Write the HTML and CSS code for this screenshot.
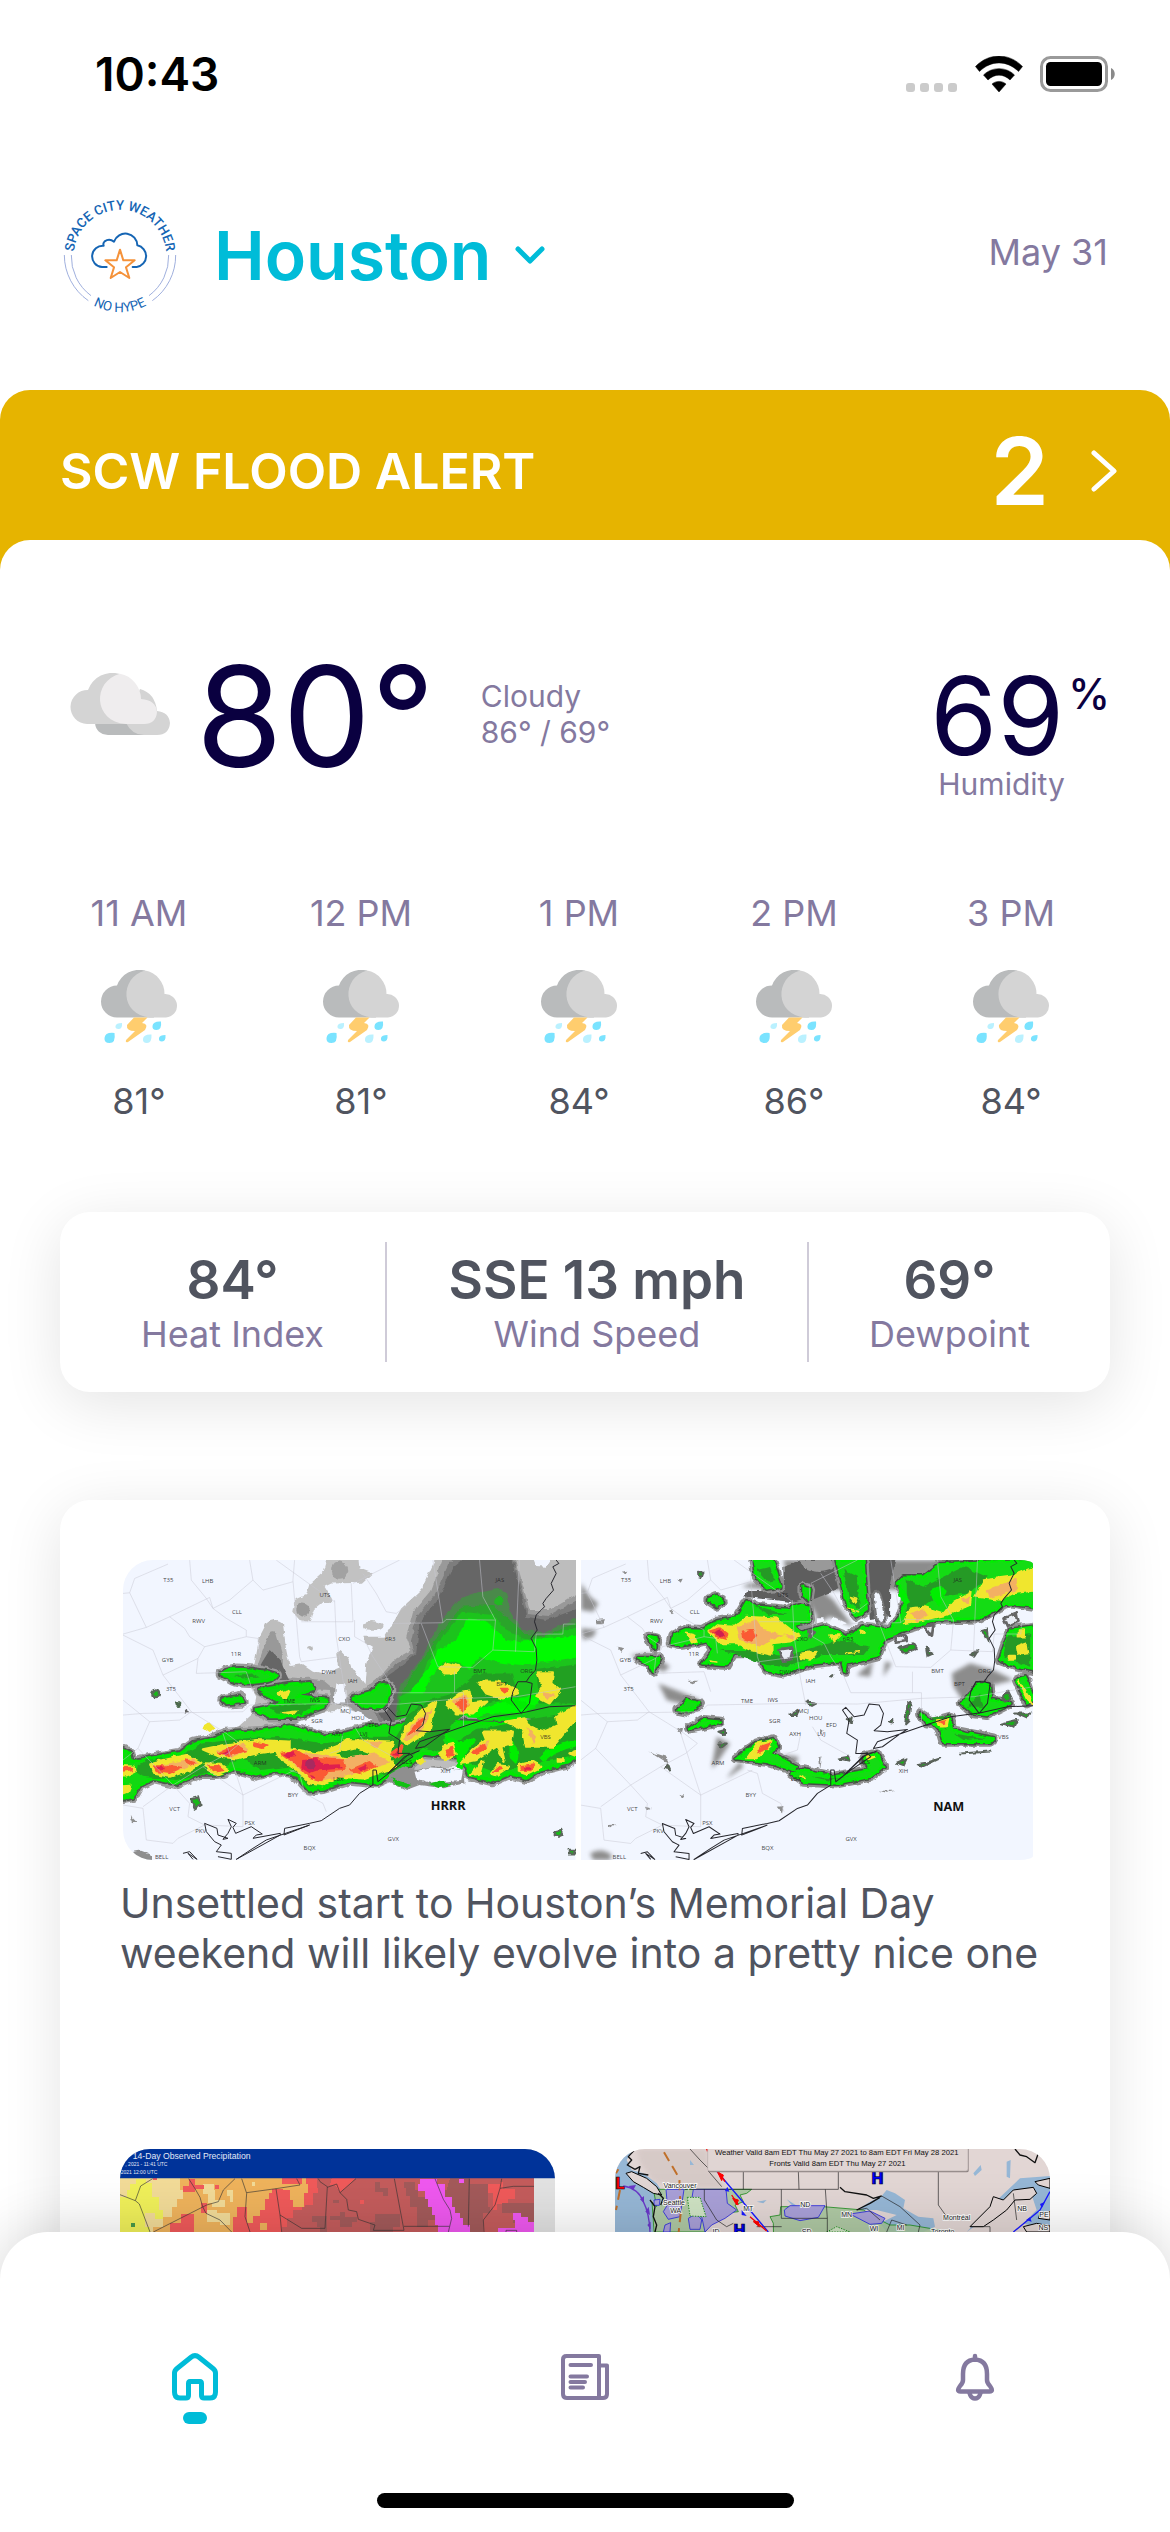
FILE: index.html
```html
<!DOCTYPE html>
<html lang="en">
<head>
<meta charset="utf-8">
<meta name="viewport" content="width=device-width, initial-scale=1">
<title>Space City Weather</title>
<link rel="stylesheet" href="styles.css">
</head>
<body>
<svg class="defs" aria-hidden="true">
  <defs>
    <symbol id="storm" viewBox="0 0 78 74">
      <path fill="#b9bbbc" d="M17 47.500A16 16 0 0 1 17 15.500A23.500 23.500 0 0 1 45 .6L54 47.500Z"/>
      <path fill="#d4d4d4" d="M45 .6A23.500 23.500 0 0 1 64.500 24A11.700 11.700 0 0 1 66 47.500H50C20 45 19 8 45 .6Z"/>
      <path fill="#ffcd6e" d="M34 47.500H47.500L42 53Q49 54 45 60L28 72Q25 73 26 70L35 61Q26 61 27 55Z"/>
      <path fill="#7ae3ff" d="M14.500 63Q16 73 9.500 73Q4 73 4.500 68Q5 62 14.500 63ZM61 51.500Q62 60 56.500 60Q52 60 52.500 56Q53 51 61 51.500ZM65.500 65Q66 71.500 62 71.500Q58.500 71.500 59 68Q59.500 65 65.500 65Z"/>
      <path fill="#baf1ff" d="M22 53Q22.500 59 18.500 59Q15 59 15.500 56Q16 53 22 53ZM51.500 64.500Q52 73 47 73Q42.500 73 43 69Q43.500 64 51.500 64.500Z"/>
    </symbol>
    <filter id="soft" x="-5%" y="-5%" width="110%" height="110%" color-interpolation-filters="sRGB">
      <feTurbulence type="fractalNoise" baseFrequency=".05" numOctaves="2" seed="4" result="noise"/>
      <feGaussianBlur in="SourceGraphic" stdDeviation="2" result="shape"/>
      <feDisplacementMap in="shape" in2="noise" scale="14" xChannelSelector="R" yChannelSelector="G"/>
    </filter>
    <filter id="softer" x="-5%" y="-5%" width="110%" height="110%" color-interpolation-filters="sRGB"><feGaussianBlur stdDeviation="7"/></filter>
    <g id="counties" fill="none" stroke="#c9c9d2" stroke-width="2.500" stroke-linejoin="round">
      <path d="M40 160L60 158 110 262M60 158L75 115 175 72M40 282L110 262 180 230 300 172 310 205 290 175 245 120 240 60M310 205L360 180 430 120 420 60M180 230L225 265 240 290 285 320 410 290 410 270 350 235 310 205M40 285L130 330 160 405 265 355 285 320M410 290L445 295 450 340M265 355L260 400 410 395 430 455 M40 480L120 545 210 540 245 515 160 405M40 525L100 520 400 515 420 495 690 490 870 492 1060 475 1220 470 1398 440M120 545L85 625 190 735 280 680 355 640 390 610 350 580 245 515M85 625L40 660M190 735L100 800M190 735L240 790 235 830 285 855 400 860 400 765 555 690M400 765L280 680M400 765L340 580M40 795L100 805 110 900 190 910 205 895 285 855M555 60L550 120 570 350 575 365 690 350M550 125L460 150 430 120M575 245L730 245 725 130M675 180L680 290 700 420 715 495M500 60L590 125 675 185M730 130L870 60M760 100L800 160 830 215 860 220 900 190M850 250L1000 248 1010 238 1158 240 1150 330 1275 335 1280 282 1360 282 1362 252 1398 252M970 60L1000 248M935 250L985 380 1090 382 1150 330M1110 60L1120 170 1158 240M1230 60L1218 335M850 458L1062 458 1062 560M1035 395V458M540 690L570 700 585 760 640 790 650 815M700 580L690 630 660 640M735 240L735 290 770 310 790 350 830 410 850 458M735 560L760 600 850 650"/>
    </g>
    <g id="coast" fill="none" stroke="#26262c" stroke-width="3" stroke-linejoin="round">
      <path d="M1340 60L1348 70 1330 80 1340 100 1325 130 1332 150 1310 175 1300 190 1305 200 1280 225 1275 245 1283 270 1265 295 1280 325 1282 360 1278 390 1260 410 1250 425 1225 425 1210 455 1205 480 1235 520 1260 490 1268 430 1250 425M1398 497L1320 500 1240 518 1150 530 1060 560 930 605 918 625 945 620 1000 580 1020 568 960 575 920 572 940 555 948 520 935 495 905 492 890 525 860 530 835 502 825 510 845 540 838 580 870 600 865 640 900 640 910 650 850 690 805 725 800 690 790 690 790 735 750 760 720 795 690 805 635 842 600 850 525 865 523 885 600 855M900 640L835 700 885 650 930 632M600 855L470 900 430 925 380 958 512 885 512 880 430 895 440 885 458 882 425 860 378 880 370 862 380 850 355 838 365 860 355 880 340 898 355 895 325 885 322 865 285 850 290 875 315 905 335 915 320 935 365 940 365 958 325 950M220 940L240 935 262 958 235 940 250 958"/>
    </g>
    <g id="stations" class="map-station">
      <text x="176" y="125">T35</text><text x="294" y="128">LHB</text><text x="382" y="223">CLL</text><text x="267" y="248">RWV</text>
      <text x="379" y="349">11R</text><text x="174" y="365">GYB</text><text x="184" y="454">3T5</text><text x="646" y="170">UTS</text>
      <text x="704" y="304">CXO</text><text x="842" y="303">6R3</text><text x="1171" y="125">JAS</text><text x="657" y="402">DWH</text>
      <text x="729" y="429">IAH</text><text x="539" y="489">TME</text><text x="616" y="485">IWS</text><text x="708" y="519">MCJ</text>
      <text x="622" y="550">SGR</text><text x="745" y="541">HOU</text><text x="792" y="560">EFD</text><text x="683" y="589">AXH</text>
      <text x="762" y="589">LVJ</text><text x="452" y="675">ARM</text><text x="686" y="724">LBX</text><text x="550" y="770">BYY</text>
      <text x="892" y="672">GLS</text><text x="1008" y="700">XIH</text><text x="1110" y="399">BMT</text><text x="1251" y="399">ORG</text>
      <text x="1176" y="439">BPT</text><text x="1308" y="598">VBS</text><text x="195" y="812">VCT</text><text x="420" y="854">PSX</text>
      <text x="273" y="879">PKV</text><text x="600" y="931">BQX</text><text x="851" y="903">GVX</text><text x="156" y="958">BELL</text>
    </g>
    <path id="rain-hrrr" d="M40 628L60 640 66 665 150 650 210 640 250 610 300 600 350 580 450 575 540 560 640 590 700 585 780 560 850 560 930 540 1398 560 1398 655 1370 670 1290 690 1250 715 1200 700 1150 722 1080 705 1060 650 940 640 880 690 800 728 720 720 640 745 600 750 560 705 500 690 440 705 370 685 330 700 270 700 200 730 130 715 90 735 70 770 40 775ZM335 400Q360 385 400 388Q460 392 500 405Q490 420 450 425Q400 430 370 420ZM450 450L540 435 600 430 610 445 560 470 650 480 640 500 560 530 480 530 440 510 520 490ZM340 480L390 470 400 485 350 488ZM730 475L780 460 Q820 420 840 440L840 460 820 500 760 500Z"/>
    <path id="rain-nam" d="M550 60L560 110 590 145 630 140 620 100 605 60ZM700 140L720 150 715 180 700 165ZM415 180L440 168 458 185 440 197ZM305 310L310 285 350 268 400 270 440 245 500 235 530 185 560 200 650 210 690 195 715 200 720 240 670 255 690 280 760 260 830 290 880 260 960 270 990 230 1010 170 980 130 1000 110 1060 110 1110 70 1390 60 1390 200 1320 190 1290 200 1230 235 1100 240 1000 270 940 300 920 350 830 370 825 395 815 360 730 370 640 400 590 390 565 340 490 340 470 375 400 370 430 330 410 300 370 310 330 315ZM235 290L260 295 255 325ZM205 355L270 355 250 395 235 370ZM1290 360L1320 270 1390 260V390L1340 380ZM325 510L350 480 390 490 350 515ZM360 565L400 540 450 545 390 560ZM500 655L560 610 610 598 620 620 600 640 680 680 670 690 590 665ZM665 700L700 690 790 710 900 690 880 650 920 640 940 680 900 710 800 730 700 725ZM1050 520L1070 550 1140 530 1145 570 1270 595 1260 605 1190 605 1120 605 1110 570 1090 550ZM1175 490L1225 430 1255 430 1260 480 1320 490 1250 525 1210 520ZM1340 420L1365 410 1390 480 1370 490ZM800 60L830 190 860 230 890 210 880 60Z"/>
  </defs>
</svg>

<div class="app">
  <div class="status">
    <span class="status-time">10:43</span>
    <div class="status-icons">
      <svg width="52" height="36" viewBox="0 0 52 36" fill="#cbcbcb" aria-hidden="true"><rect y="27" width="9" height="9" rx="3"/><rect x="14" y="27" width="9" height="9" rx="3"/><rect x="28" y="27" width="9" height="9" rx="3"/><rect x="42" y="27" width="9" height="9" rx="3"/></svg>
      <svg width="48" height="36" viewBox="0 0 48 36" aria-hidden="true"><path d="M0.500 10.500C14-3.500 34-3.500 47.500 10.500L43.500 15.500C32 4 16 4 4.500 15.500ZM8.500 19C17 10.500 31 10.500 39.500 19L35 24C28.500 17.500 19.500 17.500 13 24ZM17 28C21 24.500 27 24.500 31 28L24 36Z" stroke="#000" stroke-width=".5" stroke-linejoin="round"/></svg>
      <svg width="75" height="36" viewBox="0 0 75 36" aria-hidden="true"><rect x="1.500" y="1.500" width="65" height="33" rx="9" fill="none" stroke="#9a9a9a" stroke-width="3"/><rect x="6" y="6" width="56" height="24" rx="4.500"/><path d="M71 12C76 14 76 22 71 24Z" fill="#8a8a8a"/></svg>
    </div>
  </div>

  <header class="header">
    <svg class="logo" viewBox="60 45 360 360" role="img" aria-label="Space City Weather, no hype">
      <defs>
        <path id="arc-top" d="M102 245A139 139 0 1 1 378 245"/>
        <path id="arc-bottom" d="M71 227A169 169 0 0 0 409 227"/>
      </defs>
      <g fill="none" stroke="#8b9fd6" stroke-width="2.500">
        <path d="M73 225A167 167 0 0 0 145 362M94 225A146 146 0 0 0 153 347M407 225A167 167 0 0 1 337 362M386 225A146 146 0 0 1 327 347"/>
      </g>
      <g fill="none" stroke-width="6" stroke-linecap="round" stroke-linejoin="round">
        <path stroke="#1565b4" d="M200 261H186A32 32 0 0 1 191 197Q188 190 194 184Q208 174 222 185A36 36 0 0 1 292 196A33 33 0 0 1 290 261H278"/>
        <path stroke="#f5923a" d="M240 209L250 241H284L258 262 268 294 240 276 212 294 222 262 196 241H230Z"/>
      </g>
      <text class="logo-name"><textPath href="#arc-top" startOffset="50%">SPACE CITY WEATHER</textPath></text>
      <text class="logo-tag"><textPath href="#arc-bottom" startOffset="50%">NO HYPE</textPath></text>
    </svg>
    <button class="city" type="button">
      <span>Houston</span>
      <svg width="30" height="18" viewBox="0 0 30 18" fill="none" stroke="currentColor" stroke-width="5" stroke-linecap="round" stroke-linejoin="round" aria-hidden="true"><path d="M3 3L15 15 27 3"/></svg>
    </button>
    <time class="date" datetime="2021-05-31">May 31</time>
  </header>

  <a class="alert" href="#alert">
    <span class="alert-name">SCW FLOOD ALERT</span>
    <span class="alert-level">2</span>
    <svg width="26" height="42" viewBox="0 0 26 42" fill="none" stroke="#fff" stroke-width="5" stroke-linecap="round" stroke-linejoin="round" aria-hidden="true"><path d="M3 3L23 21 3 39"/></svg>
  </a>

  <main class="sheet">
    <section class="current">
      <div class="now">
        <svg class="now-icon" width="100" height="62" viewBox="0 0 100 62" aria-hidden="true">
          <path fill="#b9bbbc" d="M38 62Q26 61 25 50L60 20 76 62Z"/>
          <path fill="#d4d4d4" d="M56 50L70 16Q85 20 87 38Q99 39 100 50Q99 62 87 62H74Q62 62 56 50Z"/>
          <path fill="#d4d4d4" d="M17 51A17 17 0 0 1 18 17A26 26 0 0 1 50 1L62 51Z"/>
          <path fill="#efedee" d="M50 .8A26 26 0 0 1 71 26Q86 27 87 39Q86 51 74 51H56C23 49 22 8 50 .8Z"/>
        </svg>
        <strong class="now-temp">80°</strong>
        <p class="now-text">Cloudy<br>86° / 69°</p>
      </div>
      <div class="humidity">
        <p class="humidity-value">69<sup>%</sup></p>
        <p class="humidity-label">Humidity</p>
      </div>
    </section>

    <ol class="hours">
      <li><span>11 AM</span><svg><use href="#storm"/></svg><b>81°</b></li>
      <li><span>12 PM</span><svg><use href="#storm"/></svg><b>81°</b></li>
      <li><span>1 PM</span><svg><use href="#storm"/></svg><b>84°</b></li>
      <li><span>2 PM</span><svg><use href="#storm"/></svg><b>86°</b></li>
      <li><span>3 PM</span><svg><use href="#storm"/></svg><b>84°</b></li>
    </ol>

    <dl class="card stats">
      <div><dd>84°</dd><dt>Heat Index</dt></div>
      <div><dd>SSE 13 mph</dd><dt>Wind Speed</dt></div>
      <div><dd>69°</dd><dt>Dewpoint</dt></div>
    </dl>

    <section class="card news">
      <article class="lead">
        <div class="lead-maps">
          <svg viewBox="40 60 1358 900" role="img" aria-label="HRRR rainfall forecast">
            <path fill="#f2f6ff" d="M40 60H1398V960H40Z"/>
            <g filter="url(#soft)">
              <path fill="#c2c2c2" d="M655 40L640 95 600 130 590 165 555 180 548 215 570 240 600 245 615 205 640 185 672 190 660 165 645 140 665 130 760 128 790 100 750 85 745 40ZM760 250Q790 235 820 250 830 270 790 272 755 275 760 250Z"/>
              <circle cx="690" cy="90" r="26" fill="#a2a2a2"/><circle cx="580" cy="210" r="20" fill="#9a9a9a"/><circle cx="600" cy="325" r="7" fill="#bbb"/>
              <path fill="#bdbdbd" d="M985 40L935 150 875 205 850 250 825 290 765 290 765 305 790 320 770 370 765 435 725 380 715 355 690 330 680 340 690 385 650 402 610 392 580 372 540 378 530 330 520 250 Q500 230 470 250L450 290 435 370 400 400 440 470 430 520 380 565 300 590 240 620 240 700 800 700 1420 650 1420 40Z"/>
              <path fill="#999" d="M1005 40L965 150 910 215 890 290 905 330 860 355 820 400 780 430 760 490 700 470 640 420 520 410 520 350 500 280 Q480 270 475 290L445 370 450 440 660 450 670 490 720 500 830 570 1420 600 1420 150 1320 210 1260 210 1215 40Z"/>
              <path fill="#7d7d7d" d="M1018 70L975 165 920 232 905 300 915 338 860 372 810 415 790 445 780 500 840 585 1420 560 1420 175 1315 228 1255 222 1210 40 1050 40Z"/>
              <path fill="#666" d="M1030 80L985 180 930 250 920 340 860 390 800 430 800 500 850 590 1420 520 1420 200 1310 240 1250 230 1205 40 1080 40ZM480 330L455 370 480 420 540 420 510 360Z"/>
              <path fill="#f2f6ff" d="M555 550L600 525 680 512 700 498 760 522 795 545 760 550 735 550 700 580 640 585 600 575ZM1265 40L1280 78 1310 80 1335 40ZM680 430H705L710 490 675 490Z"/>
              <path fill="#4a8a4a" d="M1050 175L1110 155 1165 143 1190 160 1205 220 1235 265 1300 280 1420 222V650H860L855 540 870 440 940 350 965 290 1010 225Z"/>
              <path fill="#2aa52a" d="M1055 200L1150 195 1190 230 1245 280 1300 290 1420 240V640H865L862 500 890 430 945 350 980 295Z"/>
              <path fill="#1cc41c" d="M1060 215L1150 225 1190 270 1250 300 1420 260V600H870L870 470 930 440 950 370 990 300Z"/>
              <path fill="#00fa00" d="M1075 235Q1120 235 1150 260L1190 300Q1240 310 1290 295L1420 285V350L1240 375Q1160 370 1110 350L1080 390Q1060 370 1030 362L1000 370 965 410 940 460 900 460Q930 410 960 380L985 330 1040 300ZM1420 440L1330 460 1240 520 1130 520 1040 550 1060 510 1130 500 1200 480Z"/>
              <circle cx="1168" cy="185" r="14" fill="#22b822"/>
              <g stroke-linejoin="round">
                <use href="#rain-hrrr" fill="#9a9a9a" stroke="#9a9a9a" stroke-width="34"/>
                <use href="#rain-hrrr" fill="#4f584f" stroke="#4f584f" stroke-width="20"/>
                <use href="#rain-hrrr" fill="#12d812" stroke="#00e800" stroke-width="9"/>
              </g>
              <path fill="#22a022" d="M70 690L110 660 210 650 280 610 400 595 520 590 640 610 760 590 860 590 900 520 960 480 1030 460 1100 400 1210 400 1230 470 1130 490 1040 540 1000 600 1010 625 1100 570 1250 540 1420 510V640L1240 680 1160 700 1060 660 940 620 850 700 700 710 600 740 540 680 450 690 400 650 330 690 200 720 100 710ZM370 405L430 400 450 412 400 415ZM480 500L620 490 570 525 500 520ZM1280 390L1420 370V490L1290 490Z"/>
              <path fill="#00ee00" d="M1010 580Q1050 620 1090 590L1100 600Q1060 640 1060 690L1040 680Q1050 630 1010 600ZM1200 590Q1240 640 1220 670L1200 650ZM1290 650Q1330 610 1398 600V620Q1340 630 1300 670ZM1180 460Q1240 480 1280 500L1260 510Q1210 500 1170 480ZM1100 530Q1180 530 1240 530L1200 542H1110Z"/>
              <path fill="#8f8f8f" d="M845 700L880 680 920 690 980 680 1060 690 1065 730 1000 745 930 735 890 750 830 720Z"/>
              <path fill="#f2f6ff" d="M915 695L960 685 1060 692 1055 720 960 728 920 715Z"/>
              <path fill="#12c012" d="M845 715L905 735 890 745 855 730ZM955 732L990 722 1030 732 990 745Z"/>
              <path fill="#f0e62e" stroke="#f0e62e" stroke-width="7" stroke-linejoin="round" d="M20 678L72 680 75 695 50 706 20 706ZM20 740L62 738 55 755 20 768ZM122 670L160 660 230 645 275 668 240 690 180 710 130 700ZM280 628L340 615 440 600 540 605 540 625 620 640 680 620 710 600 850 605 840 660 860 680 760 715 690 710 640 735 600 730 560 690 510 655 500 632 440 640 380 655 330 650ZM285 670L330 672 355 690 325 702 295 690ZM285 560L300 550 312 562 300 572ZM875 600L890 560 940 510 980 485 960 570 900 610ZM1010 490L1050 460 1080 455 1085 490 1130 485 1090 520 1040 520ZM990 385L1020 370 1050 380 1040 400 1005 400ZM1105 425L1160 425 1210 440 1225 460 1180 475 1130 460ZM1285 400L1330 400 1325 430 1350 450 1320 490 1280 470 1300 440ZM1190 545L1245 535 1260 560 1300 575 1345 555 1340 530 1420 485 1420 510 1330 620 1250 620 1240 570ZM1120 575L1210 575 1205 610 1175 620 1185 665 1160 620 1100 660 1055 668 1090 630 1130 600ZM1000 620L1030 612 1038 640 1010 660 992 645ZM1085 705L1120 665 1110 700ZM1145 700L1165 675 1198 680 1160 705ZM1228 675L1270 665 1295 680 1250 702 1228 695ZM920 664L935 655 945 664 935 672ZM1345 655H1362V665H1345ZM505 460L540 450 530 475ZM520 516L560 512 550 522ZM1380 640L1420 625V655Z"/>
              <path fill="#22a022" d="M680 640L740 625 780 640 750 655 700 650Z"/>
              <path fill="#f3b063" d="M130 680L250 655 265 670 180 700ZM320 635L400 610 420 630 370 650ZM515 640L600 640 700 655 800 640 840 670 740 700 620 725 560 680ZM880 600L905 555 950 520 970 500 945 560 905 600ZM1030 480L1070 460 1080 490 1050 515ZM1250 560L1280 590 1270 610ZM1090 630L1140 600 1130 630ZM770 605L820 605 800 625ZM1300 455L1335 465 1310 480Z"/>
              <path fill="#fb5a34" stroke="#fb5a34" stroke-width="4" stroke-linejoin="round" d="M20 684L65 682 68 692 20 698ZM132 678L190 678 215 682 180 700 140 695ZM230 660L255 668 240 675ZM325 640L380 615 410 632 350 648ZM430 605L475 615 460 625 430 618ZM515 640L560 630 600 655 700 660 710 690 650 695 635 725 600 715 570 680ZM720 690L780 665 800 680 750 700ZM845 640L880 615 875 640 855 655ZM895 585L920 550 945 535 915 575ZM1040 490L1065 472 1075 495 1060 515ZM1170 445L1195 445 1185 458ZM1090 640L1125 610 1130 625 1100 640ZM1010 628L1030 622 1030 645 1015 648ZM1150 695L1165 682 1178 685ZM1235 680L1275 675 1260 692 1235 690ZM295 678L325 677 342 692 320 695Z"/>
              <path fill="#e01f4e" d="M140 680H168V688H142ZM330 645L360 630 350 645ZM520 642L550 634 560 648 535 652ZM578 660L620 655 640 672 690 670 700 685 620 692 600 700 575 685ZM745 685L770 675 775 685 755 695ZM600 705L620 712 610 718ZM1240 682H1262V689H1242ZM850 645L870 630 862 648Z"/>
              <circle cx="603" cy="672" r="16" fill="#a82a60"/>
              <g fill="#18b818" stroke="#5b665b" stroke-width="7"><circle cx="138" cy="461" r="10"/><path d="M245 775L265 770 272 795 255 805 248 790ZM1336 874L1352 870 1358 884 1345 890 1336 886ZM1378 930H1398V940H1378Z"/></g>
              <circle cx="206" cy="492" r="9" fill="#4d6a4d"/><circle cx="230" cy="514" r="7" fill="#666"/><path fill="#8e8e8e" d="M60 825L80 845 70 850ZM65 940Q95 920 130 950V970H70Z"/>
            </g>
            <use href="#counties" opacity=".6"/><use href="#coast"/><use href="#stations"/>
            <text class="map-model" x="1016" y="810">HRRR</text>
          </svg>
          <svg viewBox="33 60 1357 900" role="img" aria-label="NAM rainfall forecast">
            <path fill="#f2f6ff" d="M33 60H1390V960H33Z"/>
            <g filter="url(#softer)" fill="#8c8c8c">
              <path d="M640 60L650 100 690 130 780 150 1390 150V60ZM515 140L600 150 700 160 740 230 730 260 780 230 850 260 790 180 720 120 540 130ZM33 130L60 170 85 190 70 215 33 210ZM33 265L80 270 70 290 40 300ZM1145 400L1200 370 1270 390 1330 420 1250 440 1190 500 1150 440ZM60 940Q95 920 125 945L120 960H70ZM640 645L685 650 680 670 650 665ZM180 345L240 340 300 380 280 395ZM265 430L330 455 390 480 370 500 290 480ZM440 590L480 610 440 670 425 685ZM520 680L470 715 480 700 510 665ZM900 370L910 350 900 410 860 405ZM945 365L965 370 940 410Z"/>
            </g>
            <g filter="url(#soft)" stroke-linejoin="round">
              <path fill="#5e5e5e" d="M640 80L760 40 980 40 960 130 960 230 900 240 880 100 800 150 700 190 520 170 530 150 640 150ZM900 150L940 150 950 250 920 255 900 200Z"/>
              <path fill="#999" d="M680 60Q720 110 780 90L800 60ZM820 110L860 130 880 180 850 160Z"/>
              <path fill="#f2f6ff" d="M740 235L760 235 775 270 790 230 830 250 800 265 740 265Z"/>
              <use href="#rain-nam" fill="#8e8e8e" stroke="#8e8e8e" stroke-width="30"/>
              <use href="#rain-nam" fill="#474f47" stroke="#474f47" stroke-width="16"/>
              <use href="#rain-nam" fill="#14dc14" stroke="#00ee00" stroke-width="7"/>
              <path fill="#f2f6ff" stroke="#777" stroke-width="8" d="M908 158Q925 145 932 170L948 230Q935 262 918 235Z"/>
              <path fill="#259a25" d="M450 330L560 330 640 350 800 300 900 320 880 345 760 345 640 380 590 375ZM560 90L600 80 615 120 590 125ZM1010 120L1060 140 1100 120 1180 80 1250 110 1200 160 1100 170 1010 240ZM1310 290L1380 280V380L1300 350ZM1190 500L1230 460 1240 500ZM1080 530L1120 525 1130 570ZM1150 580L1250 595 1180 600ZM550 195L650 225 600 225ZM725 710L800 715 850 705 780 722ZM820 90L860 110 870 210 840 190Z"/>
              <path fill="#00ee00" d="M1080 150Q1110 130 1130 150L1110 200Q1085 190 1080 150ZM980 140Q1010 150 1020 190L1000 200Z"/>
              <path fill="#e9edf5" stroke="#666" stroke-width="8" d="M625 328L668 322 662 358 638 362ZM718 272L734 280 722 292ZM970 290L1000 285 1010 300 980 305ZM1065 260L1090 255 1085 290ZM1300 235L1340 220 1345 245 1310 258Z"/>
              <path fill="#f0e62e" stroke="#f0e62e" stroke-width="5" d="M415 275L440 255 490 260 530 230 620 235 690 290 660 305 605 310 605 345 540 330 500 310 450 310ZM350 280L372 285 380 305 365 308ZM692 340L740 335 720 360 695 355ZM780 285L810 285 790 305ZM868 270L885 275 875 282ZM840 170L860 175 855 190ZM835 205L865 215ZM830 340L870 335ZM1000 250L1020 205 1060 200 1120 220 1150 185 1205 155 1200 195 1130 225 1060 240ZM1215 170L1240 120 1320 110 1410 75V150L1330 160 1290 180ZM1340 320L1370 310 1375 340 1345 345ZM1345 270H1362V290H1345ZM1315 350H1335V360H1315ZM1100 540L1135 535 1130 560 1110 560ZM530 655L560 610 605 600 600 620 560 655ZM690 705L705 712ZM885 645L915 650 895 658ZM1345 420L1390 495 1370 475ZM420 363L440 366Z"/>
              <path fill="#f3b063" d="M500 260L560 240 580 270 640 285 600 300 570 320 510 300ZM1020 220L1060 205 1075 225 1040 245ZM1250 150L1340 115 1340 150 1260 175ZM1170 180L1200 168 1195 190ZM640 280L675 290 665 300Z"/>
              <path fill="#fb5a34" d="M415 272L450 262 475 280 470 300 435 290ZM515 275L550 268 560 290 545 305 520 298ZM560 640L575 615 605 605 590 630ZM1105 545L1125 540 1125 555ZM360 288L372 300ZM892 645L905 648Z"/>
              <path fill="#d01f50" d="M425 278L450 268 465 285 455 292Z"/>
              <g fill="#18b018" stroke="#5a625a" stroke-width="6"><path d="M384 95L400 98 395 112 385 108ZM655 525L685 512 680 525ZM712 484L735 488 720 496ZM445 575L465 570 465 585ZM285 685L295 675 300 688ZM445 610L470 610 455 622ZM830 540L845 532 842 545ZM955 548L970 540 968 550ZM1012 490L1022 485 1015 540 1005 550ZM780 412L790 405ZM805 655L835 650 838 662ZM980 668L1010 655 1000 675ZM1040 672L1070 668 1110 655 1060 678ZM1295 470L1315 455 1325 475 1305 485ZM1335 520L1380 520 1370 535ZM1295 550L1340 540 1330 560ZM1200 345L1225 330 1212 350ZM1235 270L1250 265 1255 310ZM985 325L1030 310 1040 325 1005 340ZM1075 350L1070 320 1085 345ZM1170 640L1260 634Z"/></g>
              <path fill="#8e8e8e" d="M155 95L175 92 168 102ZM322 118L338 116 332 128ZM298 214L310 208 306 220ZM75 240L105 238 100 250 80 250ZM140 320L165 325 155 335ZM325 765L342 762 335 772ZM620 800L640 798 636 820ZM115 855L140 853 120 862ZM225 800L245 805 230 812ZM320 570L340 560 335 580ZM240 635L290 650 295 670ZM500 825L508 820ZM748 655L755 652 750 690ZM925 752L975 752 950 758ZM998 745L1010 745ZM1290 770L1300 760ZM350 422L385 422 370 430ZM750 570L758 575 750 585Z"/>
            </g>
            <g transform="translate(-8 0)"><use href="#counties" opacity=".6"/><use href="#coast"/><use href="#stations"/></g>
            <text class="map-model" x="1136" y="813">NAM</text>
          </svg>
        </div>
        <h2>Unsettled start to Houston’s Memorial Day weekend will likely evolve into a pretty nice one</h2>
      </article>
      <div class="thumbs">
        <a href="#precipitation" aria-label="14-Day Observed Precipitation">
          <svg viewBox="60 117 1305 900">
            <path fill="#e2e2e2" d="M60 117H1365V1017H60Z"/>
            <g shape-rendering="crispEdges">
              <path fill="#efb35c" d="M60 204H1302V1017H60Z"/>
              <path fill="#f2db98" d="M60 204H240V240H250V268H232V290H215V320H190V350H160V1017H60ZM310 222H342V240H345V270H375V290H335V280H325V252H310ZM382 240H400V275H390V258H382ZM197 250H210V270H197ZM320 300H350V310H390V345H360V335H320ZM455 216H466V228H455Z"/>
              <path fill="#f0f05a" d="M90 222H108V206H138V220H155V260H178V300H190V328H165V308H135V350H150V1017H60V262H80V240H90Z"/>
              <path fill="#f05a5a" d="M266 206H285V226H312V236H285V245H250V228H266ZM345 224H357V236H345ZM302 280H320V310H302ZM242 312H282V366H210V340H242ZM515 236H550V222H545V204H1302V1017H400V320H410V290H440V340H460V318H480V300H495V268H508V250H515ZM158 204H170V210H158Z"/>
              <path fill="#efb35c" d="M550 222H605V204H618V222H625V250H612V290H580V270H570V240H550ZM480 340H502V360H480Z"/>
              <path fill="#c45c5c" d="M650 204H1302V1017H545V350H560V325H580V300H615V285H640V250H655V235H650ZM605 290H640V315H605Z"/>
              <path fill="#f05a5a" d="M695 204H768L720 248 705 225H690ZM1165 222H1200V215H1208V236H1245V268H1225V282H1190V300H1178V250H1165ZM780 270H792V282H780Z"/>
              <path fill="#a35a5a" d="M1050 204H1110V222H1165V290H1170V310H1145V366H1050V330H985V350H950V290H960V262H1030V240H1040ZM825 215H840V235H865V258H850V245H825ZM912 215H945V240H955V262H960V290H930V258H918V235H912ZM825 312H900V350H880V366H810V335H825ZM690 318H720V306H735V320H770V335H755V350H720V330H690ZM635 318H680V366H660V350H650V335H635ZM1205 280H1302V340H1240V310H1205ZM700 270H718V280H700ZM1110 300H1150V420H1110Z"/>
              <path fill="#ef58ef" d="M960 206H1012V222H1035V262H1055V290H1065V310H1080V325H1090V345H1110V366H1150V1017H1015V345H1005V315H995V290H985V268H975V242H955V222H960ZM1078 206H1092V218H1078ZM1238 310H1262V320H1285V335H1302V1017H1195V355H1245V330H1238Z"/>
              <path fill="#4a9a4a" d="M92 340H104V352H92Z"/>
            </g>
            <path fill="none" stroke="#333" stroke-opacity=".75" stroke-width="2.500" d="M158 206L122 228 106 272 60 254M106 272L118 282 150 366M160 366L320 285 355 275 370 240 405 206M266 206L285 236 300 262 308 290 318 310 360 330 395 366M425 206L440 250 435 320 450 366M440 248L528 236 600 225 590 206M528 236L540 315 605 355H675L682 230 660 215 655 206M540 315L545 366M682 232L710 222 720 248 768 206M720 248L740 268 745 300 770 305 775 328 825 345 820 361H912L883 206M912 349H1048M1005 206L1030 268 1050 300 1055 325 1045 366M1108 206L1105 350M1205 206L1200 235 1185 285 1150 330 1152 366M1200 235L1240 229H1302M1218 366V361H1250V366"/>
            <path fill="#003399" d="M60 117H1365V205H60Z"/>
            <g class="thumb-head"><text x="98" y="147" font-size="26">14-Day Observed Precipitation</text><text x="76" y="168" font-size="15">, 2021 - 11:41 UTC</text><text x="62" y="191" font-size="15">2021 12:00 UTC</text></g>
          </svg>
        </a>
        <a href="#fronts" aria-label="Weather fronts map">
          <svg viewBox="75 117 1305 900">
            <path fill="#e2d6d4" d="M75 117H1380V1017H75Z"/>
            <path fill="#cfc2bf" filter="url(#softer)" d="M140 117L350 117 360 180 410 235 300 235 190 215 150 160Z" opacity=".6"/>
            <path fill="#96b7d6" d="M75 117H130L110 150 125 180 160 190 200 220 220 250 215 290 185 270 190 366 190 1017H75ZM800 300L840 275 875 258 890 240 915 250 945 270 940 295 985 320 1030 325 1035 350 1000 366H890L870 340 920 315 860 300ZM1130 366L1200 290 1290 205 1380 198V366L1300 340 1340 300 1320 240 1270 250 1180 330ZM1150 190L1172 165 1175 180 1155 198ZM1250 155L1262 150 1260 205 1250 200ZM590 268L625 290 610 290ZM500 275L530 270 520 280ZM300 150L312 165 300 165Z"/>
            <path fill="#a6c79b" fill-opacity=".85" stroke="#1f8f1f" stroke-width="2.500" d="M190 238H485L470 250 450 255 460 275 435 285 445 305 400 310 370 330 345 366H192L186 275 200 290ZM540 320L570 315 572 290 700 290 820 300 870 330 900 345 960 345 1060 362 1060 1017H560L550 340Z"/>
            <path fill="#a9a0d8" stroke="#2a2ae0" stroke-width="2.500" d="M228 238H282L270 320 235 328 220 305 232 285ZM310 238H408L412 280 440 300 405 325 365 345 345 366 335 320 300 300ZM583 300L600 287 705 287 685 322 630 332 585 318ZM780 312L840 303 885 325 875 340 840 343ZM295 325L320 310 335 330 330 358 300 358ZM225 345L242 338 240 366H220ZM192 270L210 268 208 286 192 286Z"/>
            <path fill="#cfe3c4" stroke="#1f8f1f" stroke-width="3" stroke-dasharray="4 4" d="M292 262H330L348 320 300 318ZM710 366L740 350 780 366Z"/>
            <path fill="#e2d6d4" stroke="#000" stroke-width="3" d="M108 190L125 185 170 205 200 230 215 255 190 250 160 232 130 215ZM1210 260L1240 270 1270 240 1330 232 1340 250 1320 268 1275 270 1250 300 1210 330 1180 350 1140 350 1200 290ZM1335 215L1380 205V235L1345 225ZM1350 310L1380 305V330L1345 325ZM1300 350L1340 340 1380 348V366H1310Z"/>
            <path fill="none" stroke="#111" stroke-width="4" stroke-linejoin="round" d="M132 122L115 140 125 150 112 165 135 178M135 178L150 170 145 190 175 195M180 270L195 290 190 320 200 345 195 366M205 250L220 265 212 285M750 232L765 245 830 255 850 265 875 258M800 300L840 280 870 262M1275 117L1290 135 1310 140 1335 158 1345 130 1370 120"/>
            <path fill="none" stroke="#222" stroke-width="2" d="M285 238H745V183M460 183V238M625 183L627 238M574 238V325H712L706 238M712 325V366M1045 183V285L1070 320M343 238V270L380 330 410 350 430 340M500 350H575M355 183L395 230M800 300L830 295 870 330M890 366L905 330 950 345M1140 350H1200V366M1270 250L1280 330M875 258L930 290 990 345 985 366M300 117L330 150 360 180"/>
            <path fill="none" stroke="#c0702a" stroke-width="6" stroke-dasharray="30 18" d="M222 127L268 205 272 310 266 366M85 178L78 190M90 240L78 300"/>
            <path fill="none" stroke="#6a38c8" stroke-width="4" d="M100 228Q145 235 160 275 178 310 180 366"/>
            <path fill="#6a38c8" d="M115 228L130 240 138 225ZM150 268L162 258 162 280ZM166 305L176 290 180 315ZM172 345L182 335V358Z"/>
            <path fill="none" stroke="#1a1aff" stroke-width="4" d="M380 183L535 366M1380 245L1350 300 1270 366"/>
            <path fill="#f00" stroke="#f00" stroke-width="3" d="M383 187L400 195 395 212ZM428 265L445 270 440 285ZM490 335L505 335 508 350ZM350 117H356L352 124Z"/><path fill="none" stroke="#f00" stroke-width="4" d="M383 183L405 215M425 255L445 285M480 320L530 363"/>
            <path fill="#1a1aff" d="M412 230L418 245 405 243ZM455 300L470 318 455 315ZM1365 275L1350 282 1355 295ZM1320 322L1325 335 1308 330Z"/>
            <g class="map-place"><text x="270" y="234">Vancouver</text><text x="252" y="284">Seattle</text><text x="257" y="308">WA</text><text x="475" y="302">MT</text><text x="646" y="290">ND</text><text x="770" y="321">MN</text><text x="852" y="364">WI</text><text x="650" y="371">SD</text><text x="378" y="373">ID</text><text x="932" y="359">MI</text><text x="1100" y="329">Montréal</text><text x="1058" y="371">Toronto</text><text x="1296" y="303">NB</text><text x="1360" y="360">NS</text><text x="1362" y="320">PE</text></g>
            <g class="map-pressure"><text x="90" y="236" fill="#f00">L</text><text x="862" y="222" fill="#00f">H</text><text x="448" y="377" fill="#00f">H</text></g>
            <path fill="#8a8180" d="M355 117H1136V182Q1136 187 1130 187H360Q355 187 355 182Z"/>
            <path fill="#e0d5d3" stroke="#b7abaa" stroke-width="2" d="M353 112H1134V177Q1134 183 1128 183H359Q353 183 353 177Z"/>
            <g class="map-valid"><text x="740" y="136">Weather Valid 8am EDT Thu May 27 2021 to 8am EDT Fri May 28 2021</text><text x="742" y="167">Fronts Valid 8am EDT Thu May 27 2021</text></g>
          </svg>
        </a>
      </div>
    </section>
  </main>

  <nav class="tabs" aria-label="Main">
    <div class="tabs-row">
      <a class="tab tab-on" href="#home" aria-label="Home" aria-current="page">
        <svg viewBox="0 0 48 48" aria-hidden="true"><path stroke-width="5" d="M6 15.500L20 4.200Q24 1 28 4.200L42 15.500Q44.500 17.500 44.500 20V39Q44.500 45 39 45H33Q30.500 45 30.500 42V30.500Q30.500 28.500 29 28.500H19Q17.500 28.500 17.500 30.500V42Q17.500 45 15 45H9Q3.500 45 3.500 39V20Q3.500 17.500 6 15.500Z"/></svg>
      </a>
      <a class="tab" href="#news" aria-label="News">
        <svg viewBox="0 0 48 48" aria-hidden="true"><path stroke-width="4" d="M38 45V3H5.500Q2 3 2 6.500V41Q2 45 6 45H42Q46 45 46 41V12.500H38M9.500 12H30M9.500 23.500H26M9.500 29H24M9.500 34.500H22"/></svg>
      </a>
      <a class="tab" href="#alerts" aria-label="Notifications">
        <svg viewBox="0 0 48 48" aria-hidden="true"><path stroke-width="4.500" d="M24 6.500Q36 7 36 21V27Q36 30 39 33Q43 38.500 38.500 38.500H9.500Q5 38.500 9 33Q12 30 12 27V21Q12 7 24 6.500Z"/><path stroke-width="4.500" d="M24 6V3M18.500 40Q20 45.500 24 45.500Q28 45.500 29.500 40"/></svg>
      </a>
    </div>
    <div class="home-bar"></div>
  </nav>
</div>
</body>
</html>
```
FILE: styles.css
```css
* { box-sizing: border-box; }
body {
  margin: 0;
  background: #fff;
  color: #50545f;
  font-family: Inter, "Liberation Sans", sans-serif;
}
p, h2, dl, dd, ol { margin: 0; padding: 0; }
a { color: inherit; text-decoration: none; }
svg { display: block; flex: none; }
.defs { position: absolute; width: 0; height: 0; }

.app {
  display: flex;
  flex-direction: column;
  height: 100vh;
  overflow: hidden;
}

.status {
  flex: none;
  display: flex;
  align-items: center;
  justify-content: space-between;
  height: 148px;
  padding: 0 55px 0 95px;
}
.status-time { color: #000; font-size: 46px; font-weight: 600; }
.status-icons { display: flex; gap: 17px; }

.header {
  flex: none;
  display: flex;
  align-items: center;
  padding: 47px 62px 75px 60px;
}
.logo { width: 120px; height: 120px; }
.logo text {
  fill: #1565b4;
  text-anchor: middle;
  font-family: Roboto, "Liberation Sans", sans-serif;
}
.logo-name { font-size: 40px; font-weight: 500; }
.logo-tag { font-size: 40px; }
.city {
  display: flex;
  align-items: center;
  gap: 24px;
  margin-left: 34px;
  padding: 0;
  border: 0;
  background: none;
  color: #00bcd8;
  font: 600 68px/80px Inter, sans-serif;
}
.date { margin: 0 0 6px auto; color: #84799f; font-size: 36px; line-height: 40px; }

.alert {
  flex: none;
  display: flex;
  align-items: center;
  height: 180px;
  padding: 12px 53px 30px 60px;
  border-radius: 30px 30px 0 0;
  background: #e6b400;
  color: #fff;
}
.alert-name { font-size: 50px; font-weight: 600; }
.alert-level { margin: 0 42px 0 auto; font-size: 94px; font-weight: 600; line-height: 100px; }

.sheet {
  flex: 1;
  min-height: 0;
  margin-top: -30px;
  padding: 126px 60px 0;
  border-radius: 30px 30px 0 0;
  background: #fff;
  overflow: hidden auto;
  scrollbar-width: none;
}

.current { display: flex; justify-content: space-between; }
.now { display: flex; align-items: center; height: 100px; padding-left: 10px; }
.now-icon { margin-bottom: 24px; }
.now-temp { margin-left: 26px; color: #0a0040; font-size: 140px; font-weight: 400; line-height: 100px; }
.now-text { margin: 0 0 4px 46px; color: #84799f; font-size: 30px; line-height: 36px; }
.humidity-value {
  display: flex;
  gap: 4px;
  color: #0a0040;
  font-size: 108px;
  line-height: 100px;
}
.humidity-value sup { font-size: 42px; font-weight: 500; line-height: 56px; }
.humidity-label { padding-left: 8px; color: #84799f; font-size: 30px; line-height: 36px; }

.hours {
  display: grid;
  grid-template-columns: 222fr 222fr 214fr 216fr 218fr;
  margin: 91px -10px 0 -32px;
  list-style: none;
  font-size: 36px;
  line-height: 40px;
}
.hours li { display: flex; flex-direction: column; align-items: center; gap: 37px; }
.hours span { color: #84799f; }
.hours b { font-weight: 400; }
.hours svg { width: 78px; height: 74px; }

.card {
  border-radius: 30px;
  background: #fff;
  box-shadow: 0 12px 60px rgba(0, 0, 0, .11);
}
.stats {
  display: grid;
  grid-template-columns: 305fr 422fr 283fr;
  margin-top: 91px;
  padding: 30px 20px;
  text-align: center;
}
.stats div { display: flex; flex-direction: column; gap: 4px; padding: 8px 0; }
.stats div + div { border-left: 2px solid #cfcbd8; }
.stats dd { font-size: 53px; font-weight: 600; line-height: 60px; }
.stats dt { order: 1; color: #84799f; font-size: 36px; line-height: 40px; }

.news { margin-top: 108px; padding: 60px; }
.lead { padding-right: 16px; }
.lead-maps {
  display: flex;
  gap: 5px;
  margin: 0 1px 0 3px;
  border-radius: 30px 14px 14px 30px / 30px 4px 4px 30px;
  overflow: hidden;
}
.lead-maps svg { flex: 1; min-width: 0; height: auto; }
.lead h2 { margin: 18px -16px 0 0; font-size: 41px; font-weight: 400; line-height: 50px; }
.map-station { fill: #222; fill-opacity: .85; font: 18px "Open Sans", sans-serif; text-anchor: middle; }
.map-model { fill: #111; font: 700 38px "Open Sans", sans-serif; text-anchor: middle; }

.thumbs { display: grid; grid-template-columns: 1fr 1fr; gap: 60px; margin-top: 171px; }
.thumbs a { border-radius: 30px; overflow: hidden; }
.thumbs svg { width: 100%; }
.thumb-head { fill: #e4e9f6; font-family: "Liberation Sans", sans-serif; }
.map-place {
  fill: #222;
  stroke: #fff;
  stroke-width: 5px;
  paint-order: stroke;
  font: 21px "Liberation Sans", sans-serif;
  text-anchor: middle;
}
.map-pressure { stroke: #000; stroke-width: 2px; font: 700 46px "DejaVu Sans", sans-serif; text-anchor: middle; }
.map-valid { fill: #111; font: 23px "Liberation Sans", sans-serif; text-anchor: middle; }

.tabs {
  position: relative;
  flex: none;
  margin-top: -48px;
  padding: 121px 0 24px;
  border-radius: 48px 48px 0 0;
  background: #fff;
  box-shadow: 0 0 60px rgba(0, 0, 0, .18);
}
.tabs-row { display: grid; grid-template-columns: 1fr 1fr 1fr; justify-items: center; }
.tab { display: flex; flex-direction: column; align-items: center; gap: 11px; height: 71px; color: #84799f; }
.tab svg { width: 48px; height: 48px; fill: none; stroke: currentColor; stroke-linecap: round; stroke-linejoin: round; }
.tab-on { color: #00bcd8; }
.tab-on::after { content: ""; width: 24px; height: 12px; border-radius: 6px; background: currentColor; }
.home-bar { width: 417px; height: 15px; margin: 69px auto 0; border-radius: 8px; background: #000; }
```
